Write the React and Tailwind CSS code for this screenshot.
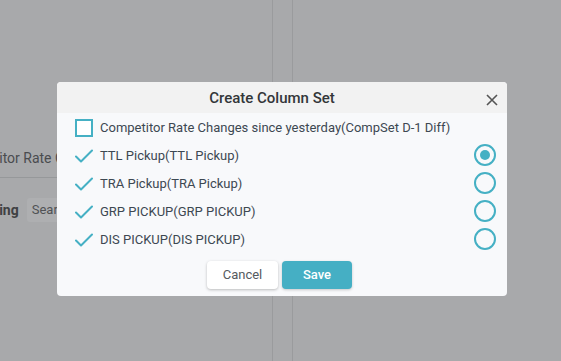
import React from 'react';

const TEAL = '#45b0c4';

const rows = [
  { label: 'Competitor Rate Changes since yesterday(CompSet D-1 Diff)', checked: false, radio: null },
  { label: 'TTL Pickup(TTL Pickup)', checked: true, radio: true },
  { label: 'TRA Pickup(TRA Pickup)', checked: true, radio: false },
  { label: 'GRP PICKUP(GRP PICKUP)', checked: true, radio: false },
  { label: 'DIS PICKUP(DIS PICKUP)', checked: true, radio: false },
];

const CheckMark = () => (
  <svg width="18" height="14" viewBox="0 0 18 14" fill="none">
    <path d="M1 7.5 L6 12.5 L17 1.5" stroke={TEAL} strokeWidth="2" strokeLinecap="round" strokeLinejoin="round" />
  </svg>
);

const Row = ({ label, checked, radio }) => (
  <div className="flex items-center h-[28px] pl-[18px] pr-[11px]">
    {checked ? (
      <span className="w-[18px] h-[18px] flex items-center justify-center">
        <CheckMark />
      </span>
    ) : (
      <span className="w-[18px] h-[18px] border-2 border-[#45b0c4] bg-white" />
    )}
    <span className="ml-[7px] text-[13px] text-[#3d4852] whitespace-nowrap">{label}</span>
    <span className="flex-1" />
    {radio !== null && (
      <span className="w-[22px] h-[22px] rounded-full border-2 border-[#45b0c4] flex items-center justify-center -mt-[2px]">
        {radio && <span className="w-[10px] h-[10px] rounded-full bg-[#45b0c4]" />}
      </span>
    )}
  </div>
);

export default function App() {
  return (
    <div className="relative w-[561px] h-[361px] overflow-hidden bg-[#a8a9ab] font-['Roboto',sans-serif]">
      {/* dimmed page behind */}
      <div className="flex h-full">
        <div className="w-[272px] h-full flex flex-col">
          <div className="h-[140px]" />
          <div className="h-[38px] flex items-center border-b border-[#96989a] overflow-hidden">
            <span className="ml-[-50px] text-[14px] text-[#4a4c4f] whitespace-nowrap">Competitor Rate Changes</span>
          </div>
          <div className="h-[20px]" />
          <div className="flex items-center h-[24px] overflow-hidden">
            <span className="ml-[-26px] text-[14px] font-bold text-[#3f4143] whitespace-nowrap">Pricing</span>
            <span className="ml-[8px] h-[24px] px-[5px] flex items-center rounded-[3px] bg-[#aeafb1] text-[13px] text-[#505255] whitespace-nowrap">Search</span>
          </div>
        </div>
        <div className="w-[21px] h-full border-l border-r border-[#9a9b9d]" />
      </div>

      {/* modal */}
      <div className="absolute left-[57px] top-[82px] w-[450px] h-[214px] rounded-[4px] bg-[#f8f9fb] overflow-hidden flex flex-col">
        <div className="relative h-[31px] bg-[#f2f2f2] flex items-center justify-center pr-[20px]">
          <span className="text-[15px] font-medium text-[#333639] mt-[1px]">Create Column Set</span>
          <svg className="absolute right-[9px] top-[12px]" width="12" height="12" viewBox="0 0 12 12" fill="none">
            <path d="M1 1 L11 11 M11 1 L1 11" stroke="#555" strokeWidth="1.6" />
          </svg>
        </div>
        <div className="flex flex-col pt-[1px]">
          {rows.map((r) => (
            <Row key={r.label} {...r} />
          ))}
        </div>
        <div className="flex justify-center gap-[4px] mt-[7px] pr-[5px]">
          <button className="w-[71px] h-[28px] rounded-[4px] bg-white text-[13px] text-[#555a60] shadow-[0_1px_3px_rgba(0,0,0,0.25)]">
            Cancel
          </button>
          <button className="w-[70px] h-[28px] rounded-[4px] bg-[#45afc4] text-[13px] font-medium text-white shadow-[0_1px_3px_rgba(0,0,0,0.2)]">
            Save
          </button>
        </div>
      </div>
    </div>
  );
}
